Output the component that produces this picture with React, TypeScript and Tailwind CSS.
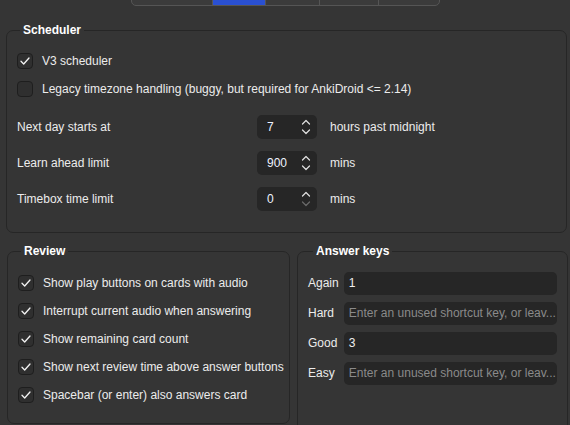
import React from "react";

const tabs = [
    { name: "Appearance", active: false, w: "w-[80px]" },
    { name: "Review", active: true, w: "w-[53px]" },
    { name: "Editing", active: false, w: "w-[54px]" },
    { name: "Syncing", active: false, w: "w-[59px]" },
    { name: "Backups", active: false, w: "w-[61px]" },
];

function CheckBox({ checked }: { checked: boolean }) {
    return (
        <div className="w-[16px] h-[16px] rounded-[4px] border border-[#1e1e1e] bg-[#2f2f2f] flex items-center justify-center shrink-0">
            {checked && (
                <svg width="12" height="12" viewBox="0 0 12 12" fill="none">
                    <path d="M2 6.3 L4.7 9 L10 3" stroke="#f2f2f2" strokeWidth="1.3" strokeLinecap="round" strokeLinejoin="round" />
                </svg>
            )}
        </div>
    );
}

function CheckRow({ label, checked, h }: { label: string; checked: boolean; h: string }) {
    return (
        <div className={`flex items-center gap-[9px] whitespace-nowrap ${h}`}>
            <CheckBox checked={checked} />
            <span>{label}</span>
        </div>
    );
}

function SpinBox({ value, atMin }: { value: string; atMin?: boolean }) {
    return (
        <div className="w-[60px] h-[24px] rounded-[5px] bg-[#262626] flex items-center pl-[10px] pr-[4px]">
            <span className="flex-1 text-[#eef3ff]">{value}</span>
            <div className="flex flex-col items-center justify-center w-[14px]">
                <svg width="10" height="7" viewBox="0 0 10 7" fill="none">
                    <path d="M1.5 5 L5 1.5 L8.5 5" stroke="#e0e0e0" strokeWidth="1.2" strokeLinecap="round" strokeLinejoin="round" />
                </svg>
                <svg width="10" height="7" viewBox="0 0 10 7" fill="none" className="mt-[2px]">
                    <path d="M1.5 2 L5 5.5 L8.5 2" stroke={atMin ? "#6a6a6a" : "#e0e0e0"} strokeWidth="1.2" strokeLinecap="round" strokeLinejoin="round" />
                </svg>
            </div>
        </div>
    );
}

function SpinRow({ label, value, suffix, atMin }: { label: string; value: string; suffix: string; atMin?: boolean }) {
    return (
        <div className="flex items-center h-[36px]">
            <span className="w-[240px]">{label}</span>
            <SpinBox value={value} atMin={atMin} />
            <span className="ml-[13px]">{suffix}</span>
        </div>
    );
}

function KeyRow({ label, value }: { label: string; value?: string }) {
    return (
        <div className="flex items-center h-[30px]">
            <span className="w-[36px]">{label}</span>
            <div className="w-[214px] h-[23px] rounded-[5px] bg-[#262626] flex items-center px-[5px] overflow-hidden whitespace-nowrap">
                {value ? (
                    <span className="text-[#eeeeee]">{value}</span>
                ) : (
                    <span className="text-[#8a8a8a]">Enter an unused shortcut key, or leav...</span>
                )}
            </div>
        </div>
    );
}

export default function App() {
    return (
        <div
            className="w-[570px] h-[425px] overflow-hidden bg-[#353535] text-[#ececec] text-[12px] leading-[18px]"
            style={{ fontFamily: '"Liberation Sans", Arial, sans-serif' }}
        >
            {/* Tab bar, scrolled mostly out of view */}
            <div className="flex justify-center h-[6px] overflow-visible">
                <div className="flex h-[28px] -mt-[22px] rounded-b-[5px] border border-[#555555] bg-[#3b3b3b] overflow-hidden">
                    {tabs.map((t, i) => (
                        <div
                            key={t.name}
                            className={`${t.w} flex items-center justify-center text-[12px] ${i > 0 ? "border-l border-[#555555]" : ""} ${t.active ? "bg-[#2a50d2] text-white" : "text-[#eeeeee]"}`}
                        >
                            {t.name}
                        </div>
                    ))}
                </div>
            </div>

            {/* Scheduler */}
            <fieldset className="ml-[6px] w-[561px] min-w-0 mt-[15px] border border-[#262626] rounded-[7px] px-[10px] pb-[15px]">
                <legend className="ml-[3px] px-[3px] font-bold text-white">Scheduler</legend>
                <div className="pt-[8px]">
                    <CheckRow label="V3 scheduler" checked h="h-[28px]" />
                    <CheckRow label="Legacy timezone handling (buggy, but required for AnkiDroid <= 2.14)" checked={false} h="h-[27px]" />
                    <div className="mt-[7px]">
                        <SpinRow label="Next day starts at" value="7" suffix="hours past midnight" />
                        <SpinRow label="Learn ahead limit" value="900" suffix="mins" />
                        <SpinRow label="Timebox time limit" value="0" suffix="mins" atMin />
                    </div>
                </div>
            </fieldset>

            <div className="flex gap-[7px] ml-[7px] mt-[9px]">
                {/* Review */}
                <fieldset className="w-[283px] min-w-0 shrink-0 h-[182px] border border-[#262626] rounded-[7px] px-[10px]">
                    <legend className="ml-[3px] px-[3px] font-bold text-white">Review</legend>
                    <div className="pt-[9px]">
                        <CheckRow label="Show play buttons on cards with audio" checked h="h-[28px]" />
                        <CheckRow label="Interrupt current audio when answering" checked h="h-[28px]" />
                        <CheckRow label="Show remaining card count" checked h="h-[28px]" />
                        <CheckRow label="Show next review time above answer buttons" checked h="h-[28px]" />
                        <CheckRow label="Spacebar (or enter) also answers card" checked h="h-[28px]" />
                    </div>
                </fieldset>

                {/* Answer keys */}
                <fieldset className="w-[271px] min-w-0 shrink-0 h-[200px] border border-[#262626] rounded-[7px] px-[10px]">
                    <legend className="ml-[5px] px-[3px] font-bold text-white">Answer keys</legend>
                    <div className="pt-[8px]">
                        <KeyRow label="Again" value="1" />
                        <KeyRow label="Hard" />
                        <KeyRow label="Good" value="3" />
                        <KeyRow label="Easy" />
                    </div>
                </fieldset>
            </div>
        </div>
    );
}
